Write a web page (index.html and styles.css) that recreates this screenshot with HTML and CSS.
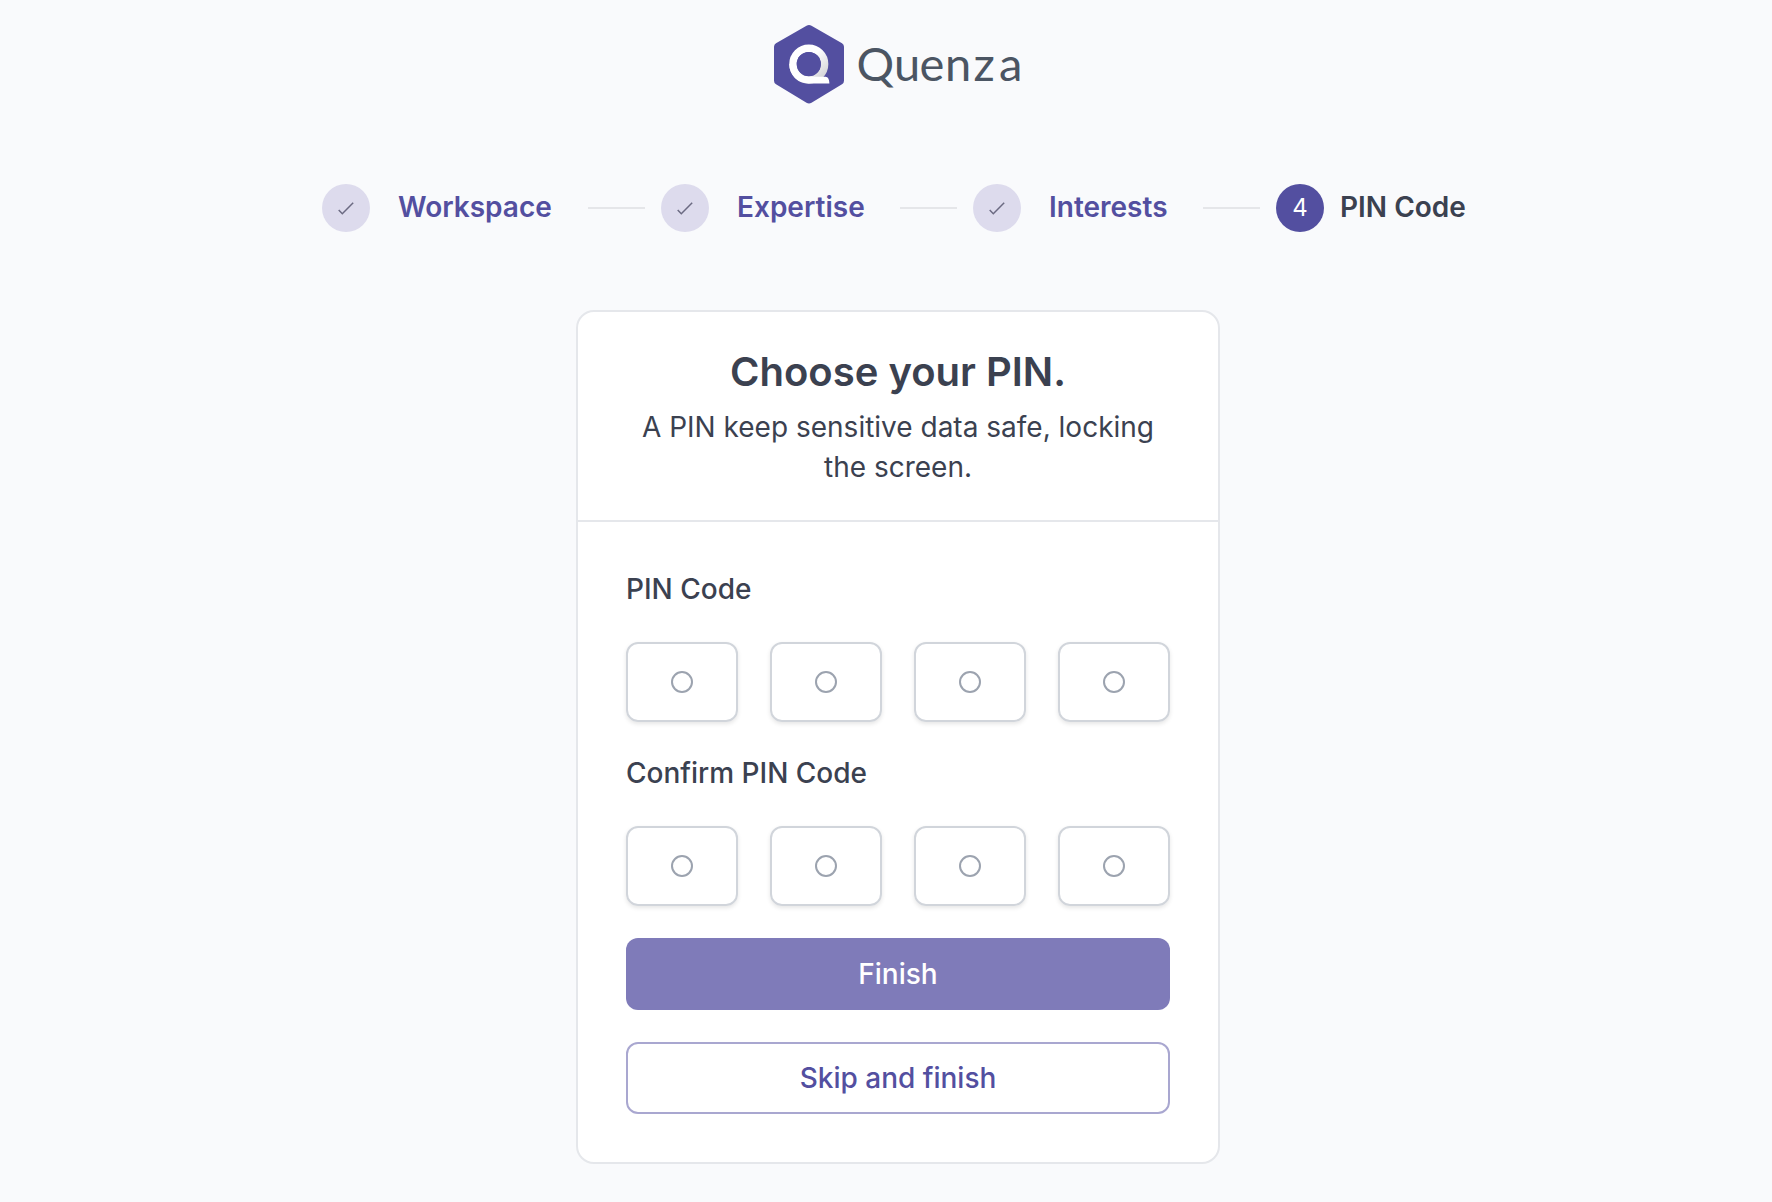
FILE: index.html
```html
<!DOCTYPE html>
<html lang="en">
<head>
<meta charset="utf-8">
<title>Quenza</title>
<link rel="stylesheet" href="styles.css">
</head>
<body>
<svg class="defs" width="0" height="0" aria-hidden="true">
  <symbol id="check" viewBox="0 0 16 13"><path d="M0.7 8L4.3 11.7L15.2 0.7" fill="none" stroke="#6b6a82" stroke-width="1.5"/></symbol>
</svg>
<main class="page">
  <header class="brand">
    <svg class="logo" width="252" height="84" viewBox="0 0 252 84" role="img" aria-label="Quenza">
      <defs>
        <linearGradient id="shade" gradientUnits="userSpaceOnUse" x1="38" y1="34" x2="53" y2="49">
          <stop offset="0" stop-color="#fff"/>
          <stop offset="1" stop-color="#d6d6da"/>
        </linearGradient>
      </defs>
      <path fill="#534fa0" d="M32.5 2.8Q35 1.4 37.5 2.8L68 20.2Q70 21.4 70 23.8V57.7Q70 60.1 68 61.3L37.5 79.7Q35 81.1 32.5 79.7L2 61.3Q0 60.1 0 57.7V23.8Q0 21.4 2 20.2Z"/>
      <circle cx="34.8" cy="41.1" r="15.8" fill="none" stroke="url(#shade)" stroke-width="7.5"/>
      <path fill="#fff" d="M19 41.1A15.8 15.8 0 0 0 34.8 53.2C39 53.7 42 53.6 51.5 53.8C54 54.1 55.2 55.9 55.4 60.6H34.8A19.5 19.5 0 0 1 15.3 41.1Z"/>
      <circle cx="34.8" cy="41.1" r="12.1" fill="#534fa0"/>
      <text class="wordmark" y="58.2" x="82.5 120 145.5 171 199.5 225">Quenza</text>
    </svg>
  </header>

  <nav class="steps">
    <div class="step step-workspace"><span class="dot"><svg class="check"><use href="#check"/></svg></span><span class="name">Workspace</span><span class="line"></span></div>
    <div class="step step-expertise"><span class="dot"><svg class="check"><use href="#check"/></svg></span><span class="name">Expertise</span><span class="line"></span></div>
    <div class="step step-interests"><span class="dot"><svg class="check"><use href="#check"/></svg></span><span class="name">Interests</span><span class="line"></span></div>
    <div class="step current"><span class="dot">4</span><span class="name">PIN Code</span></div>
  </nav>

  <section class="card">
    <div class="card-head">
      <h1>Choose your PIN.</h1>
      <p>A PIN keep sensitive data safe, locking<br>the screen.</p>
    </div>
    <form class="card-body">
      <div class="label">PIN Code</div>
      <div class="pins">
        <div class="pin"><i></i></div><div class="pin"><i></i></div><div class="pin"><i></i></div><div class="pin"><i></i></div>
      </div>
      <div class="label">Confirm PIN Code</div>
      <div class="pins">
        <div class="pin"><i></i></div><div class="pin"><i></i></div><div class="pin"><i></i></div><div class="pin"><i></i></div>
      </div>
      <button type="button" class="btn primary">Finish</button>
      <button type="button" class="btn outline">Skip and finish</button>
    </form>
  </section>
</main>
</body>
</html>
```
FILE: styles.css
```css
* { box-sizing: border-box; }
body {
  margin: 0;
  min-height: 1202px;
  background: #f9fafc;
  color: #3b4150;
  font-family: Inter, "Liberation Sans", sans-serif;
  font-size: 28px;
  line-height: 40px;
}
.defs { display: block; height: 0; }
.page {
  display: flex;
  flex-direction: column;
  align-items: center;
  padding: 22.5px 0 0 24px;
}
.brand { height: 83.5px; width: 248px; }
.logo { display: block; overflow: visible; }
.wordmark { font-family: Lato, sans-serif; font-size: 47px; fill: #4b5563; }

.steps { display: flex; margin-top: 78px; height: 48px; width: 1152px; }
.step { display: flex; align-items: center; flex: none; }
.step-workspace { width: 339px; }
.step-expertise { width: 312px; }
.step-interests { width: 303px; }
.dot {
  display: flex;
  align-items: center;
  justify-content: center;
  width: 48px;
  height: 48px;
  border-radius: 50%;
  background: #dddbed;
}
.check { width: 16px; height: 13px; }
.name { margin-left: 28px; padding-bottom: 2px; font-weight: 600; color: #534fa0; white-space: nowrap; }
.line { width: 57px; height: 2px; margin: 0 16px 0 auto; background: #e5e6e9; }
.current .dot { background: #534fa0; color: #fff; font-size: 24px; }
.current .name { margin-left: 16px; color: #3b4150; }

.card {
  width: 644px;
  height: 854px;
  margin-top: 78px;
  background: #fff;
  border: 2px solid #e5e7eb;
  border-radius: 18px;
}
.card-head {
  height: 210px;
  padding: 36px 0 0;
  border-bottom: 2px solid #e5e7eb;
  text-align: center;
}
h1 { margin: 0; font-size: 40px; line-height: 48px; font-weight: 600; }
p { margin: 11px 0 0; }
.card-body { padding: 47px 48px 0; }
.label { font-weight: 500; height: 40px; }
.pins { display: flex; gap: 32px; margin: 33px 0 31px; }
.pins + .btn { margin-top: 32px; }
.pin {
  display: flex;
  align-items: center;
  justify-content: center;
  width: 112px;
  height: 80px;
  border: 2px solid #d1d5db;
  border-radius: 12px;
  box-shadow: 0 2px 4px rgba(0, 0, 0, 0.1);
}
.pin i { width: 22px; height: 22px; border: 2px solid #9ca3af; border-radius: 50%; }
.btn {
  display: block;
  width: 544px;
  height: 72px;
  padding: 0 0 1px;
  border: 0;
  border-radius: 12px;
  font: 500 28px/40px Inter, sans-serif;
}
.primary { background: #7f7bb9; color: #fff; }
.outline { margin-top: 32px; background: #fff; border: 2px solid #a9a7d0; color: #534fa0; }
```
